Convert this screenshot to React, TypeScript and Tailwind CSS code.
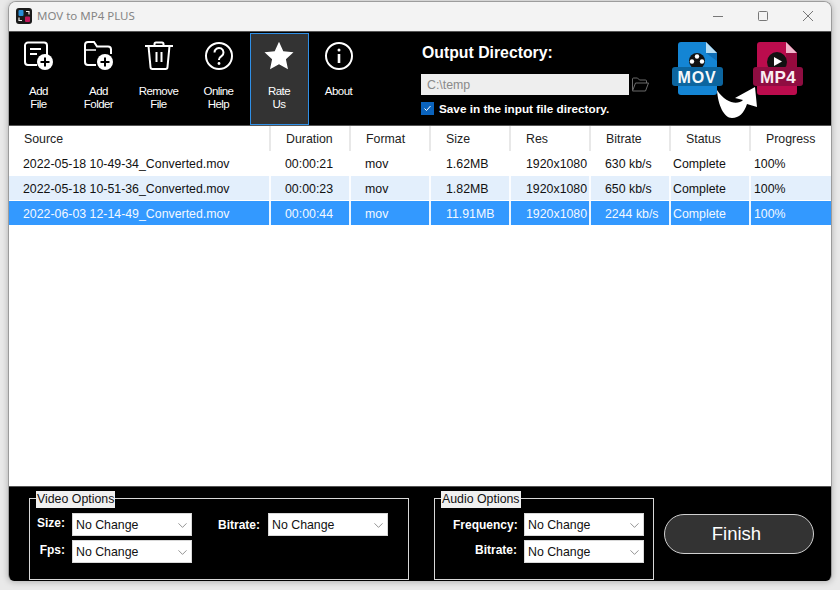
import { ChevronDown } from "lucide-react";

const columns = [
  { label: "Source", head: "pl-[15px]", cell: "pl-[14px]" },
  { label: "Duration", head: "pl-[15px]", cell: "pl-[14px]" },
  { label: "Format", head: "pl-[15px]", cell: "pl-[14px]" },
  { label: "Size", head: "pl-[15px]", cell: "pl-[15px]" },
  { label: "Res", head: "pl-[15px]", cell: "pl-[15px]" },
  { label: "Bitrate", head: "pl-[15px]", cell: "pl-[14px]" },
  { label: "Status", head: "pl-[15px]", cell: "pl-[2px]" },
  { label: "Progress", head: "pl-[15px]", cell: "pl-[3px]" },
];

const rows = [
  { values: ["2022-05-18 10-49-34_Converted.mov", "00:00:21", "mov", "1.62MB", "1920x1080", "630 kb/s", "Complete", "100%"], cls: "bg-white text-[#111]" },
  { values: ["2022-05-18 10-51-36_Converted.mov", "00:00:23", "mov", "1.82MB", "1920x1080", "650 kb/s", "Complete", "100%"], cls: "bg-[#e3effc] text-[#111]" },
  { values: ["2022-06-03 12-14-49_Converted.mov", "00:00:44", "mov", "11.91MB", "1920x1080", "2244 kb/s", "Complete", "100%"], cls: "bg-[#3399ff] text-[#f2f8ff]" },
];

const gridCols = "grid grid-cols-[262px_repeat(7,80px)]";

const IconAddFile = () => (
  <svg width="30" height="30" viewBox="0 0 30 30" fill="none" stroke="#fff" strokeWidth="2">
    <path d="M4 1.5h16a3 3 0 0 1 3 3v10M13 24H4a3 3 0 0 1-3-3V4.500a3 3 0 0 1 3-3" />
    <path d="M6 8h11M6 13h7" />
    <circle cx="21" cy="21" r="8" fill="#fff" stroke="none" />
    <path d="M21 16.500v9M16.500 21h9" stroke="#000" />
  </svg>
);

const IconAddFolder = () => (
  <svg width="30" height="30" viewBox="0 0 30 30" fill="none" stroke="#fff" strokeWidth="2">
    <path d="M12 24H4a3 3 0 0 1-3-3V4a3 3 0 0 1 3-3h6l3 4.500h11a3 3 0 0 1 3 3V13" />
    <path d="M1 9h11" strokeWidth="1.500" />
    <circle cx="21" cy="21" r="8" fill="#fff" stroke="none" />
    <path d="M21 16.500v9M16.500 21h9" stroke="#000" />
  </svg>
);

const IconTrash = () => (
  <svg width="30" height="30" viewBox="0 0 30 30" fill="none" stroke="#fff" strokeWidth="2">
    <path d="M1 5h28M10.500 5V3a1.500 1.500 0 0 1 1.500-1.500h6A1.500 1.500 0 0 1 19.500 3v2" />
    <path d="M4.500 5l2 21a2 2 0 0 0 2 2h13a2 2 0 0 0 2-2l2-21" />
    <path d="M12.500 11v10M17.500 11v10" />
  </svg>
);

const IconHelp = () => (
  <svg width="30" height="30" viewBox="0 0 30 30" fill="none" stroke="#fff" strokeWidth="2">
    <circle cx="15" cy="15" r="13" />
    <path d="M10.500 11.500a4.500 4.500 0 1 1 7 3.700c-1.500 1-2.500 1.800-2.500 3.300v.5" />
    <circle cx="15" cy="22.500" r="1.400" fill="#fff" stroke="none" />
  </svg>
);

const IconStar = () => (
  <svg width="30" height="30" viewBox="0 0 30 30" fill="#fff">
    <path d="M15 .8l4.300 9.400 10.200 1.100-7.600 6.900 2.100 10.100L15 23.200l-9 5.100 2.100-10.100L.5 11.300l10.200-1.100z" />
  </svg>
);

const IconInfo = () => (
  <svg width="30" height="30" viewBox="0 0 30 30" fill="none" stroke="#fff" strokeWidth="2">
    <circle cx="15" cy="15" r="13" />
    <circle cx="15" cy="9" r="1.500" fill="#fff" stroke="none" />
    <path d="M15 13v9" strokeWidth="2.600" />
  </svg>
);

const tools = [
  { label: ["Add", "File"], icon: <IconAddFile /> },
  { label: ["Add", "Folder"], icon: <IconAddFolder /> },
  { label: ["Remove", "File"], icon: <IconTrash /> },
  { label: ["Online", "Help"], icon: <IconHelp /> },
  { label: ["Rate", "Us"], icon: <IconStar />, active: true },
  { label: ["About"], icon: <IconInfo /> },
];

const ToolButton = ({ label, icon, active }: { label: string[]; icon: React.ReactNode; active?: boolean }) => (
  <div
    className={
      "flex h-[92px] shrink-0 flex-col items-center text-[11.5px] leading-[13px] text-white " +
      (active ? "ml-px w-[59px] border border-[#2f8fe6] bg-[#333333] pr-px pt-[7px]" : "w-[60px] pr-px pt-[8px]")
    }
  >
    {icon}
    <div className="mt-[14px] flex flex-col items-center tracking-[-0.55px]">
      {label.map((l) => (
        <span key={l}>{l}</span>
      ))}
    </div>
  </div>
);

const Select = () => (
  <div className="flex h-[23px] w-[120px] items-center justify-between border border-[#d8d8d8] bg-white pl-[3px] pr-px pt-px text-[12.35px] text-[#111]">
    <span>No Change</span>
    <ChevronDown size={15} strokeWidth={1} color="#555" />
  </div>
);

const OptionLabel = ({ children, className }: { children: React.ReactNode; className: string }) => (
  <span className={"text-right text-[12px] font-bold text-white " + className}>{children}</span>
);

const Logos = () => (
  <svg width="160" height="86" viewBox="0 0 160 86" fill="none" className="ml-[7px] mt-[6px] shrink-0">
    {/* mov file */}
    <path d="M20 6a3 3 0 0 1 3-3h25l11 11v39a3 3 0 0 1-3 3H23a3 3 0 0 1-3-3z" fill="#1485d4" />
    <path d="M48 3l11 11H48z" fill="#b9dff5" />
    <path d="M48 14h11v8z" fill="#0e6db5" />
    <circle cx="39" cy="22" r="8" fill="#111" />
    <circle cx="39" cy="17.500" r="2.200" fill="#fff" />
    <circle cx="34" cy="22.500" r="2.200" fill="#fff" />
    <circle cx="44" cy="22.500" r="2.200" fill="#fff" />
    <rect x="14" y="28" width="51" height="19" rx="3" fill="#0c659f" />
    <text x="39" y="44" textAnchor="middle" fontFamily="Liberation Sans, sans-serif" fontWeight="700" fontSize="16" letterSpacing="0.800" fill="#f4f8fb">MOV</text>
    {/* mp4 file */}
    <path d="M99 6a3 3 0 0 1 3-3h26l11 11v39a3 3 0 0 1-3 3h-34a3 3 0 0 1-3-3z" fill="#bb0c4d" />
    <path d="M128 3l11 11h-11z" fill="#f0b6cb" />
    <path d="M128 14h11v14h-11z" fill="#960a3e" />
    <circle cx="119" cy="23" r="10" fill="#111" />
    <path d="M116 18l8 4.500-8 4.500z" fill="#fff" />
    <rect x="95" y="28" width="50" height="19" rx="3" fill="#8f0d41" />
    <text x="120" y="44" textAnchor="middle" fontFamily="Liberation Sans, sans-serif" fontWeight="700" fontSize="17" letterSpacing="0.300" fill="#f9eef3">MP4</text>
    {/* arrow */}
    <path d="M59 51C60 66 66 79 74 79C81 79 86 74 89 65L99 68L97 48L77 59L85 61C80 66 68 65 59 51z" fill="#fff" />
  </svg>
);

export default function App() {
  return (
    <div className="h-[590px] w-[840px] overflow-hidden bg-[#e9e9e9] pl-[8px] pt-[1px] font-['Liberation_Sans',sans-serif]">
      <div className="flex h-[580px] w-[824px] flex-col overflow-hidden rounded-t-[8px] rounded-b-[6px] border border-b-0 border-[#9c9c9c] shadow-[0_1px_6px_rgba(0,0,0,0.25)]">
        {/* title bar */}
        <div className="flex h-[29px] shrink-0 items-center bg-[#f3f3f3] pb-px pl-[7px]">
          <svg width="16" height="16" viewBox="0 0 16 16">
            <rect width="16" height="16" rx="3" fill="#1a1a1a" />
            <rect x="2.500" y="2" width="5" height="6" rx="1" fill="#2a8fd8" />
            <rect x="9" y="8.500" width="5" height="5.500" rx="1" fill="#c2185b" />
            <path d="M10 3.500h3v3M6 12.500H3v-3" fill="none" stroke="#eee" strokeWidth="1.200" />
          </svg>
          <span className="ml-[5px] font-['Noto_Sans',sans-serif] text-[11.5px] text-[#858585]">MOV to MP4 PLUS</span>
          <div className="ml-auto flex items-center">
            <svg width="12" height="12" viewBox="0 0 12 12" stroke="#777" fill="none" className="mr-[33px]">
              <path d="M1 6.500h10" />
            </svg>
            <svg width="12" height="12" viewBox="0 0 12 12" stroke="#777" fill="none" className="mr-[33px]">
              <rect x="1.500" y="1.500" width="9" height="9" rx="1" />
            </svg>
            <svg width="12" height="12" viewBox="0 0 12 12" stroke="#777" fill="none" className="mr-[17px]">
              <path d="M1 1l10 10M11 1L1 11" />
            </svg>
          </div>
        </div>

        {/* toolbar */}
        <div className="flex h-[94px] shrink-0 items-start border-t border-[#555] bg-black pt-px">
          {tools.map((t) => (
            <ToolButton key={t.label.join(" ")} label={t.label} icon={t.icon} active={t.active} />
          ))}
          <div className="ml-[52px] flex w-[230px] shrink-0 flex-col pt-[10px]">
            <span className="pl-px text-[15.8px] font-bold leading-[20px] text-white">Output Directory:</span>
            <div className="mt-[11px] flex items-center">
              <div className="flex h-[21px] w-[208px] items-center bg-[#eeeeee] pl-[6px] pt-px text-[12.35px] text-[#8a8a8a]">C:\temp</div>
              <svg width="17" height="15" viewBox="0 0 17 15" fill="none" stroke="#6b6b6b" className="ml-[3px]">
                <path d="M.5 13V2a1 1 0 0 1 1-1h4l2 2h6a1 1 0 0 1 1 1v2" />
                <path d="M.5 14l3-8h13l-3 8z" />
              </svg>
            </div>
            <div className="mt-[7px] flex items-center">
              <div className="flex h-[13px] w-[13px] items-center justify-center bg-[#0a63bd]">
                <svg width="9" height="9" viewBox="0 0 9 9" fill="none" stroke="#fff">
                  <path d="M1.500 4.500l2 2 4-4.500" />
                </svg>
              </div>
              <span className="ml-[5px] text-[11.75px] font-bold leading-[13px] text-white">Save in the input file directory.</span>
            </div>
          </div>
          <Logos />
        </div>

        {/* file table */}
        <div className="flex min-h-0 flex-1 flex-col border-y border-[#555] bg-white">
          <div className={gridCols + " h-[25px] shrink-0 text-[12.35px] text-[#222]"}>
            {columns.map((c, i) => (
              <div key={c.label} className={"flex items-center pt-px " + c.head + (i < 7 ? " border-r-2 border-[#e8e8e8]" : "")}>
                {c.label}
              </div>
            ))}
          </div>
          {rows.map((r) => (
            <div key={r.values[0]} className={gridCols + " mb-px h-[24px] shrink-0 text-[12.35px] " + r.cls}>
              {r.values.map((v, i) => (
                <div key={i} className={"flex items-center pt-[2px] " + columns[i].cell + (i < 7 ? " border-r-2 border-white/90" : "")}>
                  {v}
                </div>
              ))}
            </div>
          ))}
        </div>

        {/* options */}
        <div className="flex h-[94px] shrink-0 items-start bg-black pl-[20px] pt-[11px]">
          <div className="relative flex h-[82px] w-[380px] items-start border border-[#d8d8d8] pl-[6px] pt-[14px]">
            <span className="absolute left-[6px] top-[-8px] bg-[#f0f0f0] px-px text-[12.35px] leading-[17px] text-[#111]">Video Options</span>
            <div className="grid grid-cols-[35px_120px] items-center gap-x-[1px] gap-y-[4px]">
              <OptionLabel className="mb-[3px] pr-[6px]">Size:</OptionLabel>
              <Select />
              <OptionLabel className="mb-[3px] pr-[6px]">Fps:</OptionLabel>
              <Select />
            </div>
            <div className="ml-[26px] flex h-[23px] items-center gap-[8px]">
              <OptionLabel className="">Bitrate:</OptionLabel>
              <Select />
            </div>
          </div>
          <div className="relative ml-[25px] flex h-[82px] w-[220px] items-start border border-[#d8d8d8] pl-[18px] pt-[14px]">
            <span className="absolute left-[6px] top-[-8px] bg-[#f0f0f0] px-px text-[12.35px] leading-[17px] text-[#111]">Audio Options</span>
            <div className="grid grid-cols-[64px_120px] items-center gap-x-[7px] gap-y-[4px]">
              <OptionLabel className="">Frequency:</OptionLabel>
              <Select />
              <OptionLabel className="mb-[3px]">Bitrate:</OptionLabel>
              <Select />
            </div>
          </div>
          <div className="ml-[10px] mt-[16px] flex h-[40px] w-[150px] items-center justify-center rounded-full border border-[#d0d0d0] bg-[#333333] pr-[5px] text-[18.5px] text-white">
            Finish
          </div>
        </div>
      </div>
    </div>
  );
}
